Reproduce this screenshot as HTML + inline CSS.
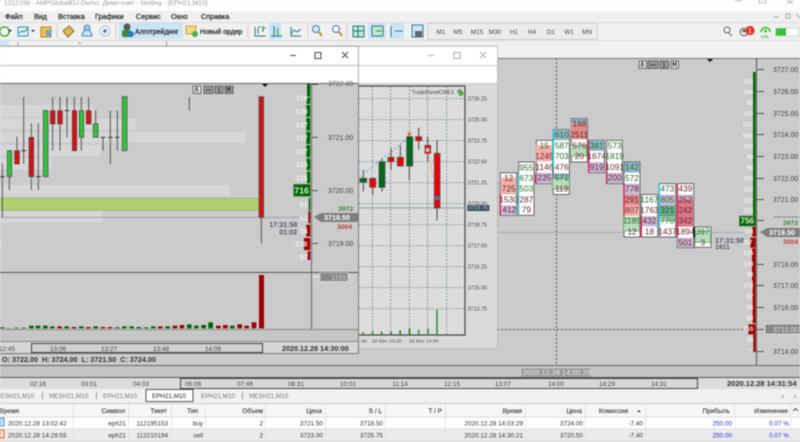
<!DOCTYPE html>
<html lang="ru">
<head>
<meta charset="utf-8">
<title>MetaTrader</title>
<style>
html,body{margin:0;padding:0;width:800px;height:442px;overflow:hidden;background:#f0f0f0}
svg{display:block;filter:blur(.45px)}
text{font-family:"Liberation Sans","DejaVu Sans",sans-serif;font-size:7.4px;fill:#333}
.m{font-size:7.2px;fill:#222;stroke:#222;stroke-width:.2}
.tb{font-size:6.9px;fill:#222;stroke:#222;stroke-width:.2}
.ax{font-size:7px;fill:#444}
.b{font-weight:bold}
.h{font-size:6.5px;fill:#444;text-anchor:end;stroke:#444;stroke-width:.15}
.c{font-size:6.4px;fill:#333;text-anchor:end}
.bl{font-size:6.4px;fill:#2a2ae0;text-anchor:end}
.tm{font-size:6.4px;fill:#444;text-anchor:middle}
.tab{font-size:6.3px;fill:#777}
.w{fill:#f4f4f4;font-size:24px;text-anchor:middle;font-weight:bold;opacity:.9}
.g{font-size:25px;fill:#2a6a2a;text-anchor:middle}
.r{font-size:25px;fill:#6a2a2a;text-anchor:middle}
.s{font-size:16px;fill:#444}
.gn{fill:#2fc53a;stroke:#555;stroke-width:2.5}
.rd{fill:#d80f0f;stroke:#555;stroke-width:2.5}
.wk{stroke:#555;stroke-width:3}
.gb{fill:#006a00}.rb{fill:#a00000}
.vg{fill:#006400}.vr{fill:#a00000}
.p{fill:#f4b0a8}.u{fill:#c8b8d8}.t{fill:#8fb8c8}.k{fill:#e08c8c}.n{fill:#b8dcc0}.e{fill:#6aa88c}.d{fill:#d87888}
.cell{fill:#fff;stroke:#666;stroke-width:3}
</style>
</head>
<body>
<svg xmlns="http://www.w3.org/2000/svg" width="800" height="442" viewBox="0 0 800 442">
<!-- title + menu -->
<rect width="800" height="11" fill="#fff"/>
<rect y="11" width="800" height="47" fill="#f0f0f0"/>
<text x="4" y="5" style="fill:#9a9a9a;font-size:6.700px">1212298 - AMPGlobalEU-Demo: Демо-счет - Netting - [EPH21,M10]</text>
<path d="M735 1h7M759 0h7v3h-7zM787 0l6 4M793 0l-6 4" stroke="#bbb" fill="none"/>
<text class="m" x="5" y="19">Файл</text><text class="m" x="34" y="19">Вид</text><text class="m" x="58" y="19">Вставка</text><text class="m" x="95" y="19">Графики</text><text class="m" x="136" y="19">Сервис</text><text class="m" x="171" y="19">Окно</text><text class="m" x="201" y="19">Справка</text>
<path d="M774 17h5M786 14h4v4h-4zM796 14l4 4" stroke="#aaa" fill="none"/>
<!-- toolbar -->
<path d="M0 22.500h800M0 40.500h800" stroke="#dcdcdc"/>
<rect x="0" y="41" width="9" height="5" fill="#cce4f7"/><path d="M18 42v4M78 43h3M166.500 41v5" stroke="#999" fill="none"/>
<rect x="0" y="27" width="9" height="9" rx="4" fill="#fff" stroke="#3aa83a" stroke-width="1.500"/>
<path d="M8 30l4 0-2 2z" fill="#222"/><path d="M31 30h4l-2 2z" fill="#222"/>
<rect x="18" y="27" width="10" height="9" fill="#dff0ff" stroke="#2e8bc8"/><path d="M19 33l3-2 2 1 4-4" stroke="#2a9a2a" fill="none"/>
<rect x="41" y="27" width="10" height="10" fill="#f2c04a" stroke="#b38a20"/><rect x="46" y="30" width="5" height="6" fill="#6aa6d8"/>
<path d="M63 31l6-5 5 5-6 6z" fill="#e3bb52" stroke="#8a6a20"/>
<circle cx="87" cy="28" r="3" fill="#9cc8ea" stroke="#4a8ac0"/><path d="M82 36q1-6 5-6t5 6z" fill="#cfe4f6" stroke="#4a8ac0"/>
<circle cx="105" cy="31" r="5" fill="none" stroke="#b5c8e0"/><circle cx="105" cy="31" r="1.800" fill="#4a78c0"/>
<path d="M57 24v14M116 24v14M248 24v14M308 24v14M347 24v14" stroke="#cfcfcf"/>
<rect x="119" y="23" width="64" height="16" fill="#cce4f7"/>
<circle cx="127" cy="27" r="3.500" fill="#555"/><rect x="122" y="30" width="9" height="7" rx="2" fill="#3f8a3f"/><circle cx="131" cy="34" r="3" fill="#2a7ac8"/>
<text class="tb" x="135" y="34">Алготрейдинг</text>
<rect x="186" y="26" width="10" height="8" fill="#f3d98a" stroke="#c9a23e"/><circle cx="195" cy="34" r="3" fill="#4cb04c"/>
<text class="tb" x="200" y="34">Новый ордер</text>
<rect x="269" y="23" width="12" height="16" fill="#cce4f7"/><rect x="368" y="23" width="18" height="16" fill="#cce4f7"/><rect x="390" y="23" width="14" height="16" fill="#cce4f7"/>
<path d="M255 27v9h11M258 28v6M263 26v6" stroke="#1e7e7e" fill="none"/><path d="M258 27h3M263 28h3" stroke="#2aa02a" fill="none"/>
<path d="M274 26v10M278 28v7M271 36h11" stroke="#1e7e7e" fill="none"/><rect x="276" y="29" width="3" height="4" fill="#8c8"/>
<path d="M291 27v9h10M291 34l3-4 3 2 4-3" stroke="#1e7e7e" fill="none"/>
<circle cx="316" cy="29" r="3.500" fill="#d6e8fa" stroke="#4a7ab0"/><path d="M319 32l3 4" stroke="#c9922e" stroke-width="2"/>
<circle cx="336" cy="29" r="3.500" fill="#eef6ff" stroke="#4a7ab0"/><path d="M339 32l3 4" stroke="#c9922e" stroke-width="2"/>
<rect x="353" y="26" width="11" height="11" fill="#bfe6d5" stroke="#2a7a7a"/><path d="M353 31h11M358 26v11" stroke="#2a7a7a"/>
<rect x="372" y="26" width="11" height="10" fill="#bfe6d5" stroke="#2a7a7a"/><path d="M376 31h6" stroke="#2a9a2a"/>
<path d="M391 26v11M395 31h8" stroke="#2a7a9a"/>
<rect x="412" y="25" width="11" height="12" fill="#cde4f4" stroke="#2a7aa8"/><rect x="415" y="31" width="7" height="6" fill="#666"/>
<rect x="427.500" y="23.500" width="170" height="16" fill="#ececec" stroke="#cfcfcf"/>
<text class="tm" x="441" y="34">M1</text><text class="tm" x="458" y="34">M5</text><text class="tm" x="477" y="34">M15</text><text class="tm" x="495" y="34">M30</text><text class="tm" x="514" y="34">H1</text><text class="tm" x="532" y="34">H4</text><text class="tm" x="551" y="34">D1</text><text class="tm" x="569" y="34">W1</text><text class="tm" x="587" y="34">MN</text>
<circle cx="727" cy="30" r="3" fill="none" stroke="#666"/><path d="M729 33l3 3" stroke="#666"/>
<circle cx="744" cy="32" r="3.800" fill="none" stroke="#555"/><circle cx="744" cy="31" r="1.500" fill="#555"/>
<circle cx="750" cy="30.500" r="4.600" fill="#e8321f"/><text x="750" y="33" style="font-size:7px;fill:#fff;text-anchor:middle">1</text>
<path d="M761 32a4.500 4.500 0 0 1 9 0" fill="none" stroke="#28c428" stroke-width="1.500"/><circle cx="765.500" cy="31" r="1.500" fill="#28c428"/><text x="761" y="38" style="font-size:4.500px;fill:#28c428;font-weight:bold">LVL</text>
<rect x="776" y="28" width="23" height="8" fill="#fff" stroke="#aaa" stroke-width=".5"/><rect x="776" y="28.500" width="10" height="7" fill="#33c233"/>
<!-- main chart -->
<rect y="58" width="800" height="307" fill="#cbcbcb"/>
<path d="M0 58.500h800" stroke="#777"/>
<path d="M556.500 58v307" stroke="#555" stroke-dasharray="2 2"/>
<path d="M497 232.500h259" stroke="#a8a8b4"/>
<path d="M497 329.500h258" stroke="#555" stroke-dasharray="2 2"/>
<path d="M756.500 58v307" stroke="#555"/>
<path d="M0 365.500h800" stroke="#666"/>
<rect x="639" y="61" width="7.500" height="7.500" fill="#ddd" stroke="#444" stroke-width=".7"/><rect x="648" y="61" width="10" height="7.500" fill="#999" stroke="#444" stroke-width=".7"/><rect x="660" y="61" width="8.500" height="7.500" fill="#999" stroke="#444" stroke-width=".7"/><rect x="671" y="61" width="7.500" height="7.500" fill="#ddd" stroke="#444" stroke-width=".7"/>
<path d="M641 67l1.300-5 1.300 5M650 65h6M664 62v6M673 67v-5l1.500 3 1.500-3v5" stroke="#222" stroke-width=".7" fill="none"/>
<path d="M707 59h6l-3 3z" fill="#111"/>
<!-- footprint -->
<g transform="translate(490 110) scale(.33333)">
<path d="M26 220h-4v128h4" fill="none" stroke="#333" stroke-width="2"/>
<rect class="cell" x="31" y="188.500" width="49" height="128"/><rect class="p" x="32" y="203" width="47" height="50"/><rect class="u" x="32" y="286" width="47" height="30"/><rect x="29" y="253" width="4" height="63" fill="#d81850"/>
<text class="r" x="56" y="213">12</text><text class="r" x="56" y="245">725</text><text class="r" x="56" y="277">1530</text><text class="r" x="58" y="307">412</text>
<rect class="cell" x="86" y="156" width="46" height="160"/><rect x="83" y="188" width="4" height="128" fill="#10c8d8"/>
<text class="g" x="109" y="181">955</text><text class="g" x="109" y="213">673</text><text class="g" x="109" y="245">503</text><text class="r" x="109" y="277">287</text><text class="r" x="109" y="307">79</text>
<rect class="cell" x="139" y="91" width="49" height="130"/><rect class="p" x="137" y="106" width="50" height="48"/><rect class="u" x="140" y="188.500" width="47" height="32"/><rect x="135" y="192" width="4" height="28" fill="#d81850"/>
<text class="g" x="163" y="116">15</text><text class="r" x="163" y="147">1245</text><text class="r" x="163" y="180">1146</text><text class="r" x="163" y="212">235</text>
<rect class="cell" x="190" y="58.500" width="48" height="195"/><rect class="t" x="191" y="59" width="46" height="32"/><rect class="t" x="191" y="190" width="46" height="15"/><rect class="n" x="187" y="205" width="51" height="32" stroke="#4a9a4a" stroke-width="2"/><rect x="188" y="58" width="4" height="120" fill="#10c8d8"/>
<text class="g" x="215" y="83">610</text><text class="g" x="215" y="115">587</text><text class="g" x="215" y="147">703</text><text class="r" x="215" y="180">476</text><text class="g" x="215" y="212">571</text><text class="r" x="215" y="245">119</text>
<rect class="cell" x="244" y="26" width="48" height="130"/><rect class="t" x="245" y="27" width="46" height="14"/><rect class="k" x="243" y="41" width="48" height="47"/><rect class="n" x="241" y="105" width="49" height="33" stroke="#4a9a4a" stroke-width="2"/>
<text class="r" x="268" y="50">188</text><text class="r" x="268" y="82">2511</text><text class="r" x="268" y="115">576</text><text class="r" x="268" y="147">20</text>
<rect class="cell" x="296" y="91" width="47" height="97"/><rect class="t" x="297" y="92" width="45" height="31"/><rect class="u" x="297" y="156" width="45" height="31"/><rect x="294" y="92" width="4" height="94" fill="#d81850"/>
<text class="g" x="320" y="115">381</text><text class="r" x="320" y="147">1674</text><text class="r" x="320" y="180">919</text>
<rect class="cell" x="350" y="91" width="47" height="130"/><rect class="u" x="351" y="188.500" width="45" height="31"/><rect x="348" y="156" width="4" height="64" fill="#d81850"/>
<text class="g" x="374" y="115">573</text><text class="g" x="374" y="147">1819</text><text class="r" x="374" y="180">1091</text><text class="r" x="374" y="212">200</text>
<rect class="cell" x="402" y="156" width="48" height="225"/><rect class="t" x="403" y="157" width="46" height="31"/><rect class="u" x="403" y="221" width="46" height="33"/><rect class="k" x="403" y="254" width="46" height="32"/><rect class="p" x="403" y="286" width="46" height="32"/><rect class="n" x="400" y="323" width="49" height="40" stroke="#4a9a4a" stroke-width="2"/><rect x="400" y="220" width="4" height="95" fill="#d81850"/>
<text class="g" x="426" y="180">142</text><text class="g" x="426" y="213">572</text><text class="r" x="426" y="245">778</text><text class="r" x="426" y="277">291</text><text class="r" x="426" y="309">807</text><text class="g" x="426" y="341">1185</text><text class="r" x="426" y="374">12</text>
<rect class="cell" x="454" y="253.500" width="49" height="127.500"/><rect class="u" x="455" y="318.500" width="47" height="31"/><rect x="452" y="318" width="4" height="62" fill="#d81850"/>
<text class="g" x="478" y="277">1167</text><text class="r" x="478" y="309">1763</text><text class="r" x="478" y="341">432</text><text class="r" x="478" y="374">18</text>
<rect class="cell" x="508" y="221" width="49" height="160"/><rect class="u" x="509" y="254" width="47" height="32"/><rect class="e" x="509" y="286" width="47" height="32"/><rect class="n" x="509" y="318" width="47" height="14" stroke="#3a8a5a" stroke-width="2"/><rect x="506" y="221" width="4" height="130" fill="#10c8d8"/>
<text class="g" x="532" y="245">473</text><text class="g" x="532" y="277">805</text><text class="g" x="532" y="309">321</text><text class="g" x="532" y="341">770</text><text class="r" x="532" y="374">1437</text>
<rect class="cell" x="562" y="221" width="49" height="192"/><rect class="u" x="563" y="254" width="47" height="14"/><rect class="d" x="563" y="268" width="47" height="82"/><rect class="u" x="563" y="383" width="47" height="29"/><rect x="560" y="222" width="4" height="160" fill="#d81850"/>
<text class="r" x="586" y="245">439</text><text class="r" x="586" y="277">252</text><text class="r" x="586" y="309">242</text><text class="r" x="586" y="341">342</text><text class="r" x="586" y="374">1894</text><text class="r" x="586" y="406">501</text>
<rect class="cell" x="614" y="351" width="49" height="61"/><rect class="n" x="615" y="363" width="47" height="34" stroke="#3a9a3a" stroke-width="2"/><rect x="610" y="351" width="5" height="32" fill="#111"/>
<text class="g" x="638" y="374">397</text><text class="r" x="638" y="407">3</text>
</g>
<text x="715" y="243" style="fill:#556;font-weight:bold;font-size:7.300px">17:31:58</text><text x="715" y="249" style="fill:#556;font-weight:bold;font-size:6.800px">1811</text>
<!-- main hist + axis -->
<g transform="translate(700 50) scale(.33333)">
<rect class="gb" x="159" y="66" width="8" height="432"/>
<rect x="118" y="498" width="49" height="30" fill="#006a00" stroke="#5a8a5a" stroke-width="2"/>
<rect class="rb" x="157" y="530" width="10" height="30"/><rect class="rb" x="151" y="563" width="16" height="30"/><rect class="rb" x="156" y="595" width="11" height="95"/><rect class="rb" x="158" y="690" width="9" height="130"/><rect x="145" y="823" width="22" height="30" class="rb"/><rect class="rb" x="160" y="853" width="7" height="53"/>
<text class="w" x="145" y="100" style="font-size:18px">160</text><text class="w" x="145" y="132" style="font-size:18px">198</text><text class="w" x="150" y="165" style="font-size:18px">80</text><text class="w" x="145" y="197" style="font-size:18px">120</text><text class="w" x="142" y="229" style="font-size:18px">131</text><text class="w" x="142" y="262" style="font-size:18px">198</text><text class="w" x="145" y="295" style="font-size:18px">169</text><text class="w" x="150" y="327" style="font-size:18px">99</text><text class="w" x="150" y="360" style="font-size:18px">98</text><text class="w" x="145" y="392" style="font-size:18px">194</text><text class="w" x="145" y="425" style="font-size:18px">130</text><text class="w" x="145" y="457" style="font-size:18px">137</text><text class="w" x="145" y="487" style="font-size:18px">125</text>
<text class="w" x="142" y="520" style="font-size:24px">756</text>
<text class="w" x="145" y="550" style="font-size:18px">184</text><text class="w" x="142" y="583" style="font-size:18px">257</text><text class="w" x="145" y="615" style="font-size:18px">135</text><text class="w" x="145" y="648" style="font-size:18px">128</text><text class="w" x="150" y="680" style="font-size:18px">98</text><text class="w" x="145" y="713" style="font-size:18px">173</text><text class="w" x="150" y="745" style="font-size:18px">87</text><text class="w" x="150" y="778" style="font-size:18px">96</text><text class="w" x="150" y="810" style="font-size:18px">80</text><text class="w" x="145" y="843" style="font-size:18px">355</text><text class="w" x="150" y="875" style="font-size:18px">39</text><text class="w" x="150" y="905" style="font-size:11px">***</text>
</g>
<g stroke="#555"><path d="M757 69.500h7M757 91.500h7M757 113.500h7M757 134.500h7M757 156.500h7M757 178.500h7M757 199.500h7M757 220.500h7M757 264.500h7M757 285.500h7M757 307.500h7M757 329.500h7M757 351.500h7"/></g>
<text class="ax" x="773" y="72">3727.00</text><text class="ax" x="773" y="94">3726.00</text><text class="ax" x="773" y="116">3725.00</text><text class="ax" x="773" y="137">3724.00</text><text class="ax" x="773" y="159">3723.00</text><text class="ax" x="773" y="181">3722.00</text><text class="ax" x="773" y="202">3721.00</text><text class="ax" x="773" y="267">3718.00</text><text class="ax" x="773" y="288">3717.00</text><text class="ax" x="773" y="310">3716.00</text><text class="ax" x="773" y="354">3714.00</text>
<path d="M774 217h25" stroke="#666" stroke-dasharray="2 1"/>
<text x="783" y="225" style="fill:#3a8a3a;font-weight:bold;font-size:6.800px">3972</text>
<path d="M760 232l7-4h33v9h-33z" fill="#7f7f7f"/><text x="769" y="235" style="fill:#fff;font-weight:bold;font-size:7.200px">3719.50</text>
<text x="783" y="244" style="fill:#c04040;font-weight:bold;font-size:6.800px">3004</text>
<rect x="765" y="324" width="35" height="10" fill="#888" stroke="#eee" stroke-width=".7"/><text x="773" y="332" style="fill:#ddd;font-size:7px">3715.00</text>
<!-- status, strips -->
<rect y="366" width="800" height="11" fill="#c4c4c4"/>
<rect x="521" y="368" width="70" height="9" fill="#999" stroke="#ddd" stroke-width=".5"/><text x="523" y="375" style="fill:#eee;font-size:7.400px">2020.12.28 14:00:29</text>
<text class="b" x="2" y="362" style="font-size:7.200px;fill:#333">O: 3722.00&#160; H: 3724.00&#160; L: 3721.50&#160; C: 3724.00</text>
<path d="M0 377.500h800" stroke="#555"/>
<rect y="378" width="800" height="11" fill="#dcdcdc"/>
<rect x="180.500" y="378.500" width="517" height="10" fill="#d8d8d8" stroke="#444"/>
<text class="tm" x="38" y="386">02:16</text><text class="tm" x="89" y="386">03:01</text><text class="tm" x="141" y="386">04:03</text><text class="tm" x="193" y="386">06:08</text><text class="tm" x="245" y="386">07:46</text><text class="tm" x="296" y="386">08:31</text><text class="tm" x="348" y="386">10:01</text><text class="tm" x="400" y="386">11:14</text><text class="tm" x="452" y="386">12:15</text><text class="tm" x="503" y="386">13:07</text><text class="tm" x="556" y="386">14:00</text><text class="tm" x="607" y="386">14:29</text><text class="tm" x="659" y="386">14:31</text>
<text class="b" x="727" y="386" style="font-size:7.500px;fill:#333">2020.12.28 14:31:54</text>
<!-- tabs -->
<rect y="389" width="800" height="14" fill="#f0f0f0"/>
<text class="tab" x="-5" y="398">MESH21,M10</text><text class="tab" x="49" y="398">MESH21,M10</text><text class="tab" x="103" y="398">EPH21,M10</text><text class="tab" x="201" y="398">EPH21,M10</text><text class="tab" x="249" y="398">MESH21,M10</text>
<path d="M42.500 392v7M96.500 392v7M242.500 392v7" stroke="#999"/>
<rect x="146" y="389.500" width="47" height="12" fill="#fff" stroke="#555"/>
<text x="152" y="398" style="font-size:6.300px;fill:#222">EPH21,M10</text>
<path d="M784 395l-2 1.500 2 1.500M794 395l2 1.500-2 1.500" stroke="#aaa" fill="none"/>
<!-- table -->
<path d="M0 403.500h800" stroke="#ccc"/>
<rect y="404" width="800" height="13" fill="#f6f6f6"/>
<rect y="417" width="800" height="12" fill="#fff"/>
<rect y="429" width="800" height="11.500" fill="#ececec"/>
<path d="M0 417h800M0 429h800M0 440.500h800" stroke="#dcdcdc"/>
<path d="M73.500 404v36M128.500 404v36M171.500 404v36M205.500 404v36M265.500 404v36M325.500 404v36M385.500 404v36M445.500 404v36M525.500 404v36M585.500 404v36M645.500 404v36M734.500 404v36M790.500 404v36" stroke="#e4e4e4"/>
<text class="h" x="19" y="413">Время</text><text class="h" x="125" y="413">Символ</text><text class="h" x="167" y="413">Тикет</text><text class="h" x="198" y="413">Тип</text><text class="h" x="263" y="413">Объем</text><text class="h" x="322" y="413">Цена</text><text class="h" x="382" y="413">S / L</text><text class="h" x="442" y="413">T / P</text><text class="h" x="522" y="413">Время</text><text class="h" x="582" y="413">Цена</text><text class="h" x="628" y="413">Комиссия</text><path d="M637 412h4l-2-2z" fill="#333"/><text class="h" x="730" y="413">Прибыль</text><text class="h" x="788" y="413">Изменение</text><path d="M793 411l2.500-2.500 2.500 2.500" stroke="#555" fill="none"/>
<rect x="0" y="418" width="4" height="8" fill="#cfe6fa" stroke="#3a90d8"/>
<rect x="0" y="430" width="4" height="8" fill="#fde0d0" stroke="#e86a30"/>
<text x="8" y="425.500" style="font-size:6.400px;fill:#333">2020.12.28 13:02:42</text><text x="8" y="437.500" style="font-size:6.400px;fill:#333">2020.12.28 14:29:55</text>
<text class="c" x="126" y="425.500">eph21</text><text class="c" x="168" y="425.500">112195153</text><text class="c" x="203" y="425.500">buy</text><text class="c" x="263" y="425.500">2</text><text class="c" x="323" y="425.500">3721.50</text><text class="c" x="383" y="425.500">3718.50</text><text class="c" x="523" y="425.500">2020.12.28 14:03:29</text><text class="c" x="583" y="425.500">3724.00</text><text class="c" x="643" y="425.500">-7.40</text><text class="bl" x="732" y="425.500">250.00</text><text class="bl" x="789" y="425.500">0.07 %</text>
<text class="c" x="126" y="437.500">eph21</text><text class="c" x="168" y="437.500">112210194</text><text class="c" x="203" y="437.500">sell</text><text class="c" x="263" y="437.500">2</text><text class="c" x="323" y="437.500">3723.00</text><text class="c" x="383" y="437.500">3725.75</text><text class="c" x="523" y="437.500">2020.12.28 14:30:21</text><text class="c" x="583" y="437.500">3720.50</text><text class="c" x="643" y="437.500">-7.40</text><text class="bl" x="732" y="437.500">250.00</text><text class="bl" x="789" y="437.500">0.07 %</text>
<!-- window 2 -->
<rect x="340" y="46" width="157.500" height="302.500" fill="#dadada" stroke="#aaa" stroke-width=".5"/>
<rect x="340" y="47" width="157" height="18" fill="#fff"/><rect x="340" y="66" width="157" height="17" fill="#fff"/>
<path d="M340 65.500h157M340 83.500h157" stroke="#ccc"/>
<path d="M428 55.500h6M454 52.500h6v6h-6zM480 52l6 6M486 52l-6 6" stroke="#aaa" fill="none"/>
<g transform="translate(350 80) scale(.33333)">
<rect x="27" y="18" width="318" height="747" fill="#dcdcdc"/>
<path d="M67 18v747M122 18v747M178 18v747M233 18v747M290 18v747M27 56h318M27 119h318M27 182h318M27 245h318M27 308h318M27 371h318M27 434h318M27 497h318M27 560h318M27 623h318M27 686h318" stroke="#4f7070" stroke-width="2" stroke-dasharray="5 5" fill="none"/>
<path d="M27 18h318v747H27" fill="none" stroke="#444" stroke-width="3.500"/>
<path d="M27 384h318" stroke="#9aa8a8" stroke-width="4"/>
<g stroke="#444" stroke-width="3"><path d="M40 270v65M68 295v50M96 235v100M123 205v65M151 195v63M178 162v138M206 143v65M233 170v75M261 180v242"/></g>
<g stroke="#555" stroke-width="2.500"><rect x="30" y="295" width="20" height="12" fill="#006a18"/><rect x="59" y="295" width="18" height="27" fill="#f00000"/><rect x="87" y="245" width="18" height="77" fill="#006a18"/><rect x="114" y="232" width="18" height="13" fill="#f00000"/><rect x="142" y="232" width="18" height="26" fill="#f00000"/><rect x="170" y="170" width="18" height="88" fill="#006a18"/><rect x="197" y="170" width="18" height="12" fill="#f00000"/><rect x="225" y="196" width="17" height="24" fill="#f00000"/><rect x="253" y="220" width="17" height="164" fill="#f00000"/></g>
<path d="M30 290L165 182" stroke="#6a9ac8" stroke-width="3" stroke-dasharray="5 7"/><path d="M235 220l15 75" stroke="#ee8a6a" stroke-width="3" stroke-dasharray="5 6"/>
<circle cx="178" cy="161" r="5" fill="#f06030"/><circle cx="233" cy="210" r="6" fill="#f0a0a0" stroke="#ddd"/><circle cx="261" cy="354" r="6" fill="#2a70c0" stroke="#9cc"/>
<g fill="#128a12"><rect x="37" y="756" width="4" height="9"/><rect x="66" y="754" width="4" height="11"/><rect x="93" y="754" width="4" height="11"/><rect x="121" y="754" width="4" height="11"/><rect x="148" y="751" width="5" height="14"/><rect x="176" y="745" width="5" height="20"/><rect x="204" y="749" width="4" height="16"/><rect x="232" y="745" width="4" height="20"/><rect x="259" y="689" width="4" height="76"/></g>
<text class="s" x="185" y="42">TradePanelCME3</text>
<circle cx="329" cy="34" r="8" fill="#9a9a9a"/><circle cx="333" cy="40" r="8" fill="#3cb83c"/>
<text class="s" x="353" y="62">3726.25</text><text class="s" x="353" y="125">3725.00</text><text class="s" x="353" y="188">3723.75</text><text class="s" x="353" y="251">3722.50</text><text class="s" x="353" y="314">3721.25</text><text class="s" x="353" y="377">3720.00</text><text class="s" x="353" y="440">3718.75</text><text class="s" x="353" y="503">3717.50</text><text class="s" x="353" y="566">3716.25</text><text class="s" x="353" y="629">3715.00</text><text class="s" x="353" y="692">3713.75</text>
<rect x="352" y="375" width="66" height="18" fill="#2f5050"/><text x="355" y="389" style="font-size:16px;fill:#cde">3719.75</text>
<text class="s" x="30" y="788" style="font-size:15px">:40</text><text class="s" x="66" y="788" style="font-size:15px">20 Dec 13:20</text><text class="s" x="177" y="788" style="font-size:15px">20 Dec 14:00</text>
</g>
<!-- window 1 -->
<rect x="-2" y="46" width="360.500" height="307.500" fill="#cbcbcb" stroke="#999" stroke-width=".7"/>
<rect x="0" y="47" width="358" height="18" fill="#fff"/><rect x="0" y="66" width="358" height="17" fill="#fff"/>
<path d="M0 65.500h358" stroke="#bbb"/><path d="M0 83.500h358" stroke="#666"/>
<path d="M290 55.500h6M315 52.500h6v6h-6zM342 52l6 6M348 52l-6 6" stroke="#444" fill="none"/>
<rect x="193" y="86" width="8" height="7.500" fill="#ddd" stroke="#444" stroke-width=".7"/><rect x="204" y="86" width="9" height="7.500" fill="#999" stroke="#444" stroke-width=".7"/><rect x="215" y="86" width="8" height="7.500" fill="#999" stroke="#444" stroke-width=".7"/><rect x="225" y="86" width="8" height="7.500" fill="#999" stroke="#444" stroke-width=".7"/>
<path d="M195 92l1.500-5 1.500 5M206 90h5M219 87v6M227 92v-5l1.500 3 1.500-3v5" stroke="#222" stroke-width=".7" fill="none"/>
<path d="M262 84h6l-3 3z" fill="#111"/>
<g transform="translate(0 90) scale(.33333)">
<g fill="#d7d7d7"><rect y="45" width="282" height="35"/><rect y="86" width="408" height="32"/><rect y="126" width="738" height="32"/><rect y="165" width="303" height="33"/><rect y="205" width="156" height="33"/><rect y="285" width="690" height="33"/><rect y="365" width="307" height="33"/><rect y="445" width="5" height="33"/></g>
<rect y="325" width="778" height="35" fill="#b0d070" stroke="#90b048" stroke-width="2"/>
<path d="M0 382h935" stroke="#a0a0b0" stroke-width="3"/>
<g class="wk"><path d="M7 220v162M28 182v118M51 140v82M71 21v201M94 100v200M115 100v200M137 60v202M158 21v161M180 21v161M201 21v121M223 21v161M244 21v161M266 21v81M287 62v80M309 142v40M331 62v160M352 62v120M568 21v41M784 382v78"/></g>
<path d="M0 260h14M64 182h14M108 260h14M194 62h14M302 142h14M324 142h14M345 142h14" stroke="#333" stroke-width="3"/>
<rect class="gn" x="22" y="182" width="13" height="78"/><rect class="rd" x="44" y="182" width="14" height="40"/><rect class="rd" x="87" y="142" width="14" height="118"/><rect class="gn" x="130" y="62" width="14" height="198"/><rect class="rd" x="151" y="62" width="14" height="40"/><rect class="rd" x="173" y="62" width="14" height="40"/><rect class="rd" x="217" y="62" width="13" height="120"/><rect class="gn" x="238" y="62" width="13" height="80"/><rect class="rd" x="259" y="62" width="14" height="40"/><rect class="gn" x="280" y="102" width="14" height="40"/><rect class="gn" x="367" y="20" width="14" height="162"/>
<rect class="rd" x="777" y="20" width="14" height="362"/>
<path d="M92 266a6 4 0 0 0 8 0M132 58a6 4 0 0 1 10 0" fill="none" stroke="#8fe0e0" stroke-width="2.500"/>
<rect class="gb" x="921" y="-20" width="10" height="40"/><rect class="gb" x="920" y="22" width="11" height="20"/><rect class="gb" x="919" y="45" width="12" height="36"/><rect class="gb" x="919" y="84" width="12" height="38"/><rect class="gb" x="919" y="125" width="12" height="37"/><rect class="gb" x="919" y="165" width="12" height="37"/><rect class="gb" x="920" y="205" width="11" height="36"/><rect class="gb" x="921" y="244" width="10" height="36"/>
<rect x="881" y="283" width="50" height="36" fill="#006a00" stroke="#5a8a5a" stroke-width="2"/>
<rect class="gb" x="926" y="324" width="5" height="37"/>
<rect class="rb" x="925" y="363" width="6" height="37"/><rect class="rb" x="919" y="404" width="12" height="36"/><rect class="rb" x="912" y="444" width="19" height="36"/><rect class="rb" x="923" y="483" width="8" height="27"/>
<text class="w" x="905" y="32" style="font-size:22px">119</text><text class="w" x="905" y="72" style="font-size:22px">130</text><text class="w" x="905" y="112" style="font-size:22px">137</text><text class="w" x="905" y="152" style="font-size:22px">137</text><text class="w" x="905" y="192" style="font-size:22px">137</text><text class="w" x="905" y="231" style="font-size:22px">125</text><text class="w" x="905" y="271" style="font-size:22px">115</text><text class="w" x="905" y="310" style="font-size:26px">716</text><text class="w" x="911" y="351" style="font-size:22px">51</text><text class="w" x="911" y="391" style="font-size:22px">60</text><text class="w" x="911" y="431" style="font-size:22px">34</text><text class="w" x="904" y="470" style="font-size:22px">218</text><text class="w" x="911" y="509" style="font-size:22px">97</text>
<text x="808" y="411" style="font-size:21px;fill:#556;font-weight:bold">17:31:58</text><text x="838" y="434" style="font-size:21px;fill:#556;font-weight:bold">01:02</text>
</g>
<path d="M311.500 84v268" stroke="#777" stroke-width="1.200"/>
<path d="M312 137.500h6M312 190.500h6M312 243.500h6M312 84.500h6" stroke="#555"/>
<text class="ax" x="328" y="86" style="fill:#555">3722.00</text><text class="ax" x="328" y="140">3721.00</text><text class="ax" x="328" y="193">3720.00</text><text class="ax" x="328" y="246">3719.00</text>
<text x="338" y="211" style="fill:#3a8a3a;font-weight:bold;font-size:6.800px">3972</text>
<path d="M314 217l7-4h37v9h-37z" fill="#7f7f7f"/><text x="324" y="220" style="fill:#fff;font-weight:bold;font-size:7.200px">3719.50</text>
<text x="337" y="229" style="fill:#c04040;font-weight:bold;font-size:6.800px">3004</text>
<path d="M0 272.500h358" stroke="#555"/><path d="M0 329.500h358" stroke="#888"/>
<path d="M312 276.500h7" stroke="#eee"/><rect x="320" y="273" width="28" height="8.500" fill="#888" stroke="#eee" stroke-width=".6"/><text x="331" y="280" style="fill:#ddd;font-size:6.500px">1770</text>
<g transform="translate(0 260) scale(.33333)">
<g class="vg"><rect x="0" y="202" width="14" height="3"/><rect x="20" y="204" width="14" height="1"/><rect x="42" y="203" width="14" height="2"/><rect x="64" y="203" width="14" height="2"/><rect x="87" y="197" width="14" height="8"/><rect x="107" y="197" width="14" height="8"/><rect x="129" y="197" width="14" height="8"/><rect x="150" y="199" width="14" height="6"/><rect x="193" y="199" width="14" height="6"/><rect x="237" y="199" width="14" height="6"/><rect x="280" y="199" width="14" height="6"/><rect x="345" y="202" width="14" height="3"/><rect x="366" y="199" width="14" height="6"/><rect x="388" y="199" width="14" height="6"/><rect x="409" y="201" width="14" height="4"/><rect x="431" y="202" width="14" height="3"/><rect x="453" y="199" width="14" height="6"/><rect x="496" y="199" width="14" height="6"/><rect x="561" y="193" width="14" height="12"/><rect x="582" y="197" width="14" height="8"/><rect x="604" y="195" width="14" height="10"/><rect x="625" y="187" width="14" height="18"/><rect x="690" y="197" width="14" height="8"/></g>
<g class="vr"><rect x="172" y="199" width="14" height="6"/><rect x="215" y="201" width="14" height="4"/><rect x="258" y="201" width="14" height="4"/><rect x="302" y="201" width="14" height="4"/><rect x="323" y="201" width="14" height="4"/><rect x="474" y="199" width="14" height="6"/><rect x="518" y="197" width="14" height="8"/><rect x="539" y="195" width="14" height="10"/><rect x="648" y="197" width="14" height="8"/><rect x="669" y="195" width="14" height="10"/><rect x="712" y="193" width="14" height="12"/><rect x="733" y="197" width="14" height="8"/><rect x="755" y="187" width="14" height="18"/><rect x="777" y="45" width="15" height="160"/></g>
</g>
<rect x="0" y="330" width="358" height="12" fill="#c6c6c6"/>
<rect x="0" y="342" width="358" height="11" fill="#d6d6d6"/>
<path d="M0 341.500h358" stroke="#888"/>
<rect x="31.500" y="343.500" width="231" height="9" fill="#d0d0d0" stroke="#444"/>
<text class="tm" x="7" y="351">12:45</text><text class="tm" x="58" y="351">13:06</text><text class="tm" x="109" y="351">13:27</text><text class="tm" x="161" y="351">13:48</text><text class="tm" x="213" y="351">14:09</text>
<text class="b" x="282" y="351" style="font-size:7.200px;fill:#333">2020.12.28 14:30:00</text>
<path d="M358.500 84v270M0 353.500h359" stroke="#777"/>
</svg>
</body>
</html>
